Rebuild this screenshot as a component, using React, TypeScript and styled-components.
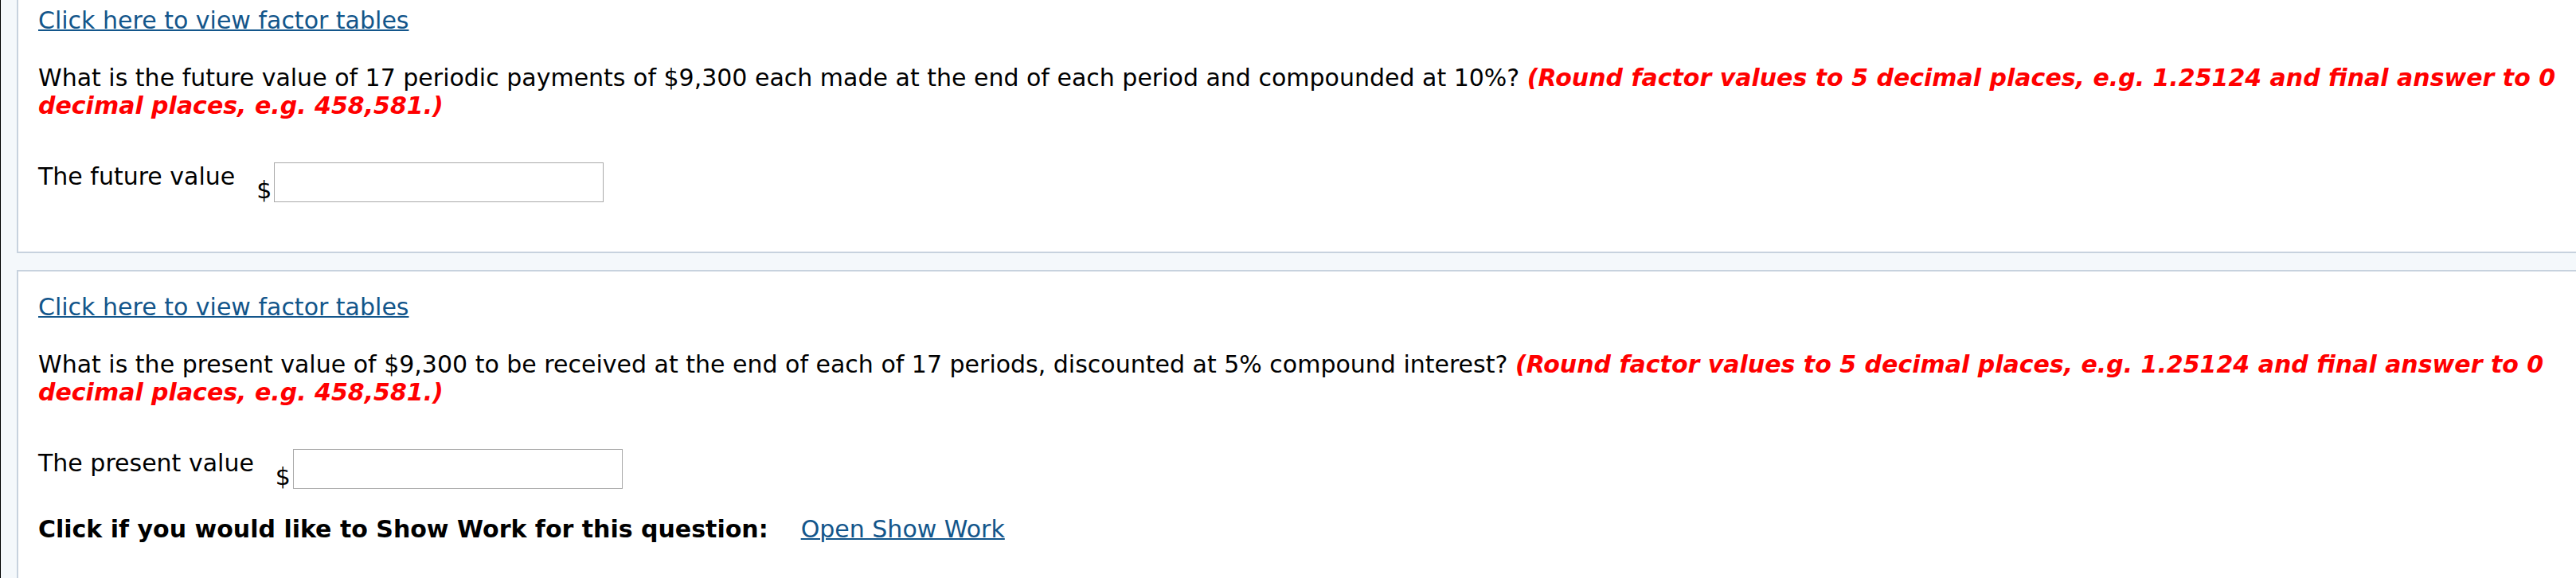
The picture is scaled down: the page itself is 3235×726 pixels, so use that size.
import React from 'react';
import styled, { createGlobalStyle } from 'styled-components';

const GlobalStyle = createGlobalStyle`
  html, body {
    margin: 0;
    padding: 0;
    background: #f4f8fb;
    overflow: hidden;
  }
  body {
    font-family: "DejaVu Sans", Verdana, sans-serif;
    font-size: 30px;
    color: #000;
  }
`;

const Page = styled.div`
  border-left: 1px solid #000;
  background: #f4f8fb;
  padding-left: 20px;
  height: 726px;
  overflow: hidden;
  box-sizing: border-box;
`;

const List = styled.div`
  margin-top: -21px;
  margin-right: -60px;
  display: flex;
  flex-direction: column;
  gap: 21px;
`;

const Panel = styled.section<{ $padBottom: number }>`
  background: #fff;
  border: 2px solid #c7d2de;
  padding: 27px 25px ${p => p.$padBottom}px;
`;

const FactorLink = styled.a`
  display: inline-block;
  line-height: 35px;
  color: #13568b;
  text-decoration: underline;
  text-decoration-thickness: 2px;
  cursor: pointer;
`;

const Question = styled.p`
  margin: 37px 0 0;
  line-height: 35px;
  white-space: nowrap;
`;

const Hint = styled.span`
  color: #ff0000;
  font-weight: bold;
  font-style: italic;
`;

const AnswerRow = styled.div`
  margin-top: 54px;
  display: flex;
  align-items: flex-start;
`;

const Label = styled.span`
  line-height: 35px;
  margin-right: 27px;
`;

const Currency = styled.span`
  align-self: flex-end;
  line-height: 35px;
  margin-bottom: -2px;
  margin-right: 3px;
`;

const AmountInput = styled.input`
  width: 414px;
  height: 50px;
  box-sizing: border-box;
  border: 1px solid #a9a9a9;
  background: #fff;
  margin: 0;
  padding: 0 4px;
  font: inherit;
  outline: none;
`;

const ShowWork = styled.p`
  margin: 33px 0 0;
  line-height: 35px;
  font-weight: bold;
  white-space: nowrap;
`;

const ShowWorkLink = styled.a`
  margin-left: 41px;
  font-weight: normal;
  color: #13568b;
  text-decoration: underline;
  text-decoration-thickness: 2px;
  cursor: pointer;
`;

const hintText = '(Round factor values to 5 decimal places, e.g. 1.25124 and final answer to 0';

export default function App() {
  return (
    <>
      <GlobalStyle />
      <Page>
        <List>
          <Panel $padBottom={62}>
            <FactorLink>Click here to view factor tables</FactorLink>
            <Question>
              What is the future value of 17 periodic payments of $9,300 each made at the end of each
              period and compounded at 10%? <Hint>{hintText}</Hint>
              <br />
              <Hint>decimal places, e.g. 458,581.)</Hint>
            </Question>
            <AnswerRow>
              <Label>The future value</Label>
              <Currency>$</Currency>
              <AmountInput type="text" aria-label="The future value" />
            </AnswerRow>
          </Panel>
          <Panel $padBottom={60}>
            <FactorLink>Click here to view factor tables</FactorLink>
            <Question>
              What is the present value of $9,300 to be received at the end of each of 17 periods,
              discounted at 5% compound interest? <Hint>{hintText}</Hint>
              <br />
              <Hint>decimal places, e.g. 458,581.)</Hint>
            </Question>
            <AnswerRow>
              <Label>The present value</Label>
              <Currency>$</Currency>
              <AmountInput type="text" aria-label="The present value" />
            </AnswerRow>
            <ShowWork>
              Click if you would like to Show Work for this question:
              <ShowWorkLink>Open Show Work</ShowWorkLink>
            </ShowWork>
          </Panel>
        </List>
      </Page>
    </>
  );
}
